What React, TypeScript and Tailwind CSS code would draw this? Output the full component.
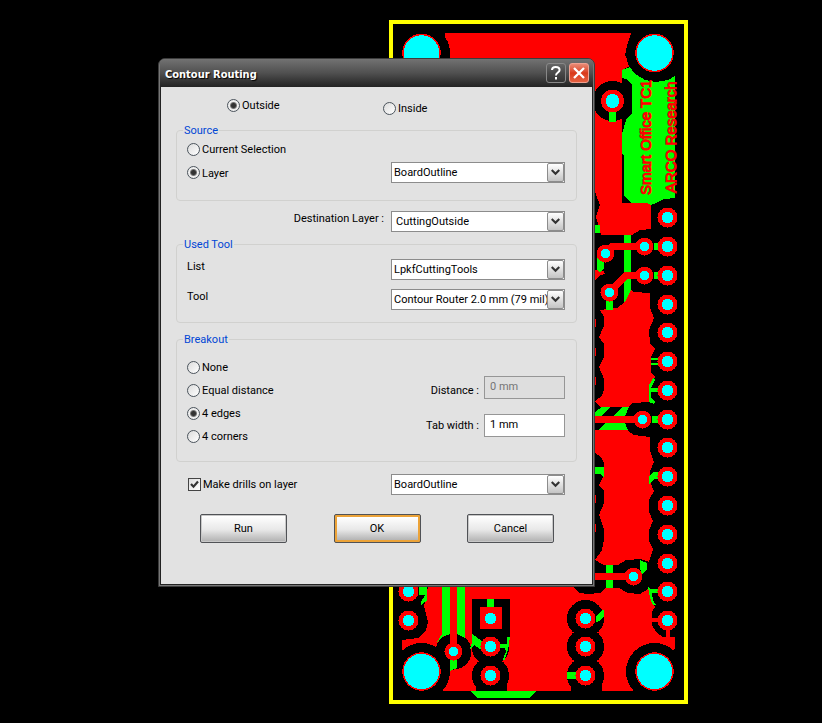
import type { ReactNode } from "react";

const RED = "#ff0000";
const GREEN = "#00ff00";
const CYAN = "#00ffff";

type Point = [number, number];

const columnPads: Point[] = [
  217, 246, 275, 304, 332, 361, 390, 419, 447, 476, 505, 534, 563, 591, 620,
].map((y): Point => [667.5, y + 0.5]);

const largePads: Point[] = [
  ...columnPads,
  [585.5, 618.5],
  [585.5, 646.5],
  [585.5, 675.5],
  [408.5, 591.5],
  [408.5, 620.5],
  [490.5, 646.5],
  [490.5, 675.5],
];

const vias: Point[] = [
  [644.5, 246.5],
  [605.5, 253.5],
  [644.5, 275.5],
  [609.5, 292.5],
  [642.5, 419.5],
  [633.5, 576.5],
  [453.5, 651.5],
];

const mountingHoles: Point[] = [
  [421.5, 53],
  [654.5, 53],
  [421.5, 671.5],
  [654.5, 671.5],
];

function CircuitBoard() {
  return (
    <svg
      className="absolute left-[389px] top-5"
      width="299"
      height="684"
      viewBox="389 20 299 684"
      shapeRendering="crispEdges"
      aria-label="Circuit board"
    >
      {/* copper areas */}
      <g fill={RED}>
        <path d="M445 33H631L625 55L630 66L622 70V203H651V229L640 230L632 235H601L596 217L600 205L595 192H445Z" />
        <path d="M595 230H632L634 233L628 235H604Z" />
        <path d="M595 270L604 271L605 274L600 275L595 280Z" />
        <path d="M600 310L617 308L624 303L627 295L629 288L634 292L650 293V308L654 318L649 330L650 344L655 349L651 357V373L655 377L650 387V402L632 403L628 407H600L595 401L602 396L604 390V379L599 367L604 357V344L599 337L604 326V317Z" />
        <path d="M595 430H627L634 435L650 437V451L654 462L650 471V482L654 491L649 500V512L653 521L649 530V541L653 549L649 562L641 559L626 560L618 565H604L595 560L602 550L604 539V529L599 515L604 503V491L599 485L604 475V463L601 457L595 453Z" />
        <path d="M428 587H573L580 593L588 594L600 593L605 588H619L628 593L640 594L648 589L655 607L652 612V625L656 632L663 637H675V648L650 691H444L402 660V640L418 638L426 630L428 622L424 606Z" />
        <path d="M595 319h1v8h-1zM595 348h1v8h-1zM595 377h1v8h-1zM595 495h1v8h-1zM595 524h1v8h-1zM595 97h1v9h-1z" />
      </g>

      {/* clearances */}
      <g fill="#000">
        {mountingHoles.map(([x, y]) => (
          <circle key={`${x}-${y}`} cx={x} cy={y} r="28.5" />
        ))}
        <circle cx="453.5" cy="651.5" r="18" />
        <circle cx="408.5" cy="620.5" r="18.5" />
        <circle cx="408.5" cy="591.5" r="18.5" />
        <rect x="472" y="599" width="38" height="40" />
        <circle cx="490.5" cy="646.5" r="19" />
        <circle cx="490.5" cy="675.5" r="18.5" />
        <circle cx="585.5" cy="618.5" r="18.5" />
        <circle cx="585.5" cy="646.5" r="18.5" />
        <circle cx="585.5" cy="675.5" r="18.5" />
        <rect x="476" y="684" width="31" height="8" />
        <rect x="571" y="684" width="31" height="8" />
      </g>
      <rect x="391" y="22" width="295" height="680" fill="none" stroke="#ffff00" strokeWidth="4" />

      {/* top label field */}
      <path
        d="M622 70L630 67L634 73L645 80L656 82L668 80L675 76V198L664 199L656 203L651 205L647 203H632L624 196V155L622 154V134L626 120L632 113V85L628 80L622 78Z"
        fill={GREEN}
      />
      <circle cx="612.5" cy="101" r="20" fill="#000" />
      <path d="M595 117L601 119L606 122H622V130H595Z" fill={RED} />
      <path d="M656 203L664 199L675 198V205H656Z" fill="#000" />

      {/* green layer */}
      <g fill={GREEN}>
        <rect x="609" y="112" width="7" height="10" />
        <rect x="595" y="225" width="5" height="8" />
        <path d="M624 235H631V290L626 300L624 303Z" />
        <path d="M597 257H604V268L600 273L597 270Z" />
        <rect x="606" y="300" width="7" height="10" />
        <rect x="654" y="243" width="5" height="7" />
        <rect x="654" y="272" width="5" height="7" />
        <path d="M651 358h8v2h-8zM651 363h8v2h-8z" />
        <path d="M654 377L655 380L651 388H659V392H651V398L655 402L654 404L649 402V385Z" />
        <path d="M595 416V412L602 407H610L601 416ZM613 416L622 407H629L625 416ZM599 430L605 423H625L628 430Z" />
        <rect x="652" y="416" width="7" height="7" />
        <path d="M595 467H604V477L600 474H595Z" />
        <path d="M649 476L653 472H659V479H654L649 484Z" />
        <path d="M640 560L647 563V570L642 574L640 568Z" />
        <rect x="606" y="565" width="7" height="23" />
        <path d="M648 587L651 589H659V593H652L653 600L656 605H653L650 598Z" />
        <path d="M596 616L603 609L604 611V617L599 621L596 622Z" />
        <rect x="567" y="672" width="10" height="7" />
        <path d="M419 587H427V601L423 603L421 606V602L425 595H419Z" />
        <path d="M442 587H450V634L444 636L437 642L442 634ZM457 587H465V638L457 634Z" />
        <path d="M450 659H457V668L450 671Z" />
        <rect x="487" y="599" width="7" height="9" />
        <path d="M472 634L482 641L483 651L474 645L470 649L472 642Z" />
        <path d="M500 644H507V637H510L508 650L504 661L503 659L506 652L505 648H500Z" />
        <path d="M470 691H536L530 698H477Z" />
      </g>

      {/* traces */}
      <g fill="none" stroke={RED} strokeWidth="7">
        <path d="M606 253L612 246.5H645" />
        <path d="M610 292L626 275.5H645" />
        <path d="M595 419.5H643M595 576.5H634M453.5 587V651" />
        <path d="M651 620H660M668 628V640" strokeWidth="4" />
      </g>
      <rect x="480" y="607" width="22" height="22" fill={RED} />
      <circle cx="490.5" cy="618.5" r="5.7" fill={CYAN} />

      {largePads.map(([x, y]) => (
        <g key={`${x}-${y}`}>
          <circle cx={x} cy={y} r="10" fill={RED} />
          <circle cx={x} cy={y} r="5.7" fill={CYAN} />
        </g>
      ))}
      {vias.map(([x, y]) => (
        <g key={`${x}-${y}`}>
          <circle cx={x} cy={y} r="9" fill={RED} />
          <circle cx={x} cy={y} r="4.7" fill={CYAN} />
        </g>
      ))}
      <circle cx="612.5" cy="101" r="11.5" fill={RED} />
      <circle cx="612.5" cy="101" r="7" fill={CYAN} />
      {mountingHoles.map(([x, y]) => (
        <circle key={`${x}-${y}`} cx={x} cy={y} r="18.5" fill={CYAN} stroke={RED} strokeWidth="1.5" />
      ))}

      <g
        fill={RED}
        stroke={RED}
        strokeWidth="1"
        fontFamily="'Liberation Sans', Arial, sans-serif"
        fontSize="15"
      >
        <text transform="translate(651 195) rotate(-90)">Smart Office TC1</text>
        <text transform="translate(676 193) rotate(-90)">ARCO Research</text>
      </g>
    </svg>
  );
}

function Radio({ name, label, checked }: { name: string; label: string; checked?: boolean }) {
  return (
    <label className="flex h-[14px] items-center gap-[2px]">
      <input
        type="radio"
        name={name}
        defaultChecked={checked}
        className="size-[13px] shrink-0 appearance-none rounded-full border border-[#4b545c] bg-linear-to-br from-[#dcdcdc] to-white checked:bg-[radial-gradient(circle,#333_0_2px,#777_3px,#eee_4px)]"
      />
      <span className="pt-[2px]">{label}</span>
    </label>
  );
}

function Combo({ id, value, label, indent }: { id: string; value: string; label?: string; indent?: boolean }) {
  return (
    <div className="relative h-[21px] w-[174px] shrink-0">
      <select
        id={id}
        aria-label={label}
        className={`block size-full appearance-none border border-[#8c8c8c] bg-white pr-4 pt-px text-black outline-none ${indent ? "pl-1" : "pl-[2px]"}`}
      >
        <option>{value}</option>
      </select>
      <span className="pointer-events-none absolute inset-y-px right-px flex w-[17px] items-center justify-center rounded-xs border border-[#8c8c8c] bg-linear-to-b from-white to-[#c4c4c4]">
        <svg width="9" height="7" viewBox="0 0 9 7" fill="none" stroke="#333" strokeWidth="2.2">
          <path d="M0.7 1L4.5 4.8L8.3 1" />
        </svg>
      </span>
    </div>
  );
}

function Group({ title, className, children }: { title: string; className: string; children: ReactNode }) {
  return (
    <fieldset className={`min-w-0 rounded-[4px] border border-[#d1d1cf] px-[10px] ${className}`}>
      <legend className="-ml-1 h-[14px] px-px pt-px text-[#0046d5]">{title}</legend>
      {children}
    </fieldset>
  );
}

function PushButton({ children, primary }: { children: string; primary?: boolean }) {
  return (
    <button
      type="button"
      className={
        primary
          ? "h-[29px] w-[87px] rounded-[2px] border border-[#505256] bg-[#eca338] p-[2px]"
          : "h-[29px] w-[87px] rounded-[2px] border border-[#505256] bg-[#c8c8c8] p-px"
      }
    >
      <span className="flex size-full items-center justify-center bg-linear-to-b from-white via-[#e8e8e8] via-55% to-[#b4b4b4] pt-px">
        {children}
      </span>
    </button>
  );
}

function TitleBar() {
  return (
    <header className="flex h-7 items-center justify-between bg-linear-to-b from-[#727272] via-[#505050] via-50% to-[#232323] pl-[5px] pr-1">
      <h1
        id="dialog-title"
        className="pt-[3px] font-['DejaVu_Sans_Condensed','DejaVu_Sans',sans-serif] text-[11px] font-bold text-white [text-shadow:1px_1px_1px_#000]"
      >
        Contour Routing
      </h1>
      <div className="flex gap-[3px]">
        <button
          type="button"
          aria-label="Help"
          className="flex size-5 items-center justify-center rounded-[3px] border border-[#888] bg-linear-to-b from-[#666] via-[#484848] to-[#333]"
        >
          <svg width="12" height="14" viewBox="0 0 12 14" fill="none" stroke="#fff" strokeWidth="2">
            <path d="M2 4C2 1.8 3.6 1 5.7 1C8 1 9.6 2 9.6 4C9.6 6.5 6 6.5 6 9.4M6 11v2.4" />
          </svg>
        </button>
        <button
          type="button"
          aria-label="Close"
          className="flex size-5 items-center justify-center rounded-[3px] border border-[#f0a090] bg-linear-to-b from-[#e88a75] via-[#d93818] to-[#e66040]"
        >
          <svg width="12" height="12" viewBox="0 0 12 12" fill="none" stroke="#fff" strokeWidth="2.3">
            <path d="M1 1L11 11M11 1L1 11" />
          </svg>
        </button>
      </div>
    </header>
  );
}

export default function App() {
  return (
    <main className="relative min-h-screen overflow-hidden bg-black font-[Roboto,'DejaVu_Sans_Condensed',sans-serif] text-[11px] leading-[14px] text-black">
      <CircuitBoard />
      <section
        role="dialog"
        aria-labelledby="dialog-title"
        className="absolute left-[158px] top-[58px] w-[437px] overflow-hidden rounded-t-[7px] border border-[#3c3c3c] bg-[#777] px-px pb-px"
      >
        <TitleBar />
        <form className="border-x border-b border-[#222] bg-[#e2e2e2] px-[15px] pb-[41px]">
          <div className="flex h-9 items-start pl-[51px] pt-[11px]">
            <div className="w-39">
              <Radio name="side" label="Outside" checked />
            </div>
            <div className="pt-[3px]">
              <Radio name="side" label="Inside" />
            </div>
          </div>

          <Group title="Source" className="h-[78px]">
            <div className="flex flex-col gap-[6px] pt-[5px]">
              <Radio name="source" label="Current Selection" />
              <div className="flex items-center justify-between pr-px">
                <Radio name="source" label="Layer" checked />
                <Combo id="source-layer" label="Source layer" value="BoardOutline" />
              </div>
            </div>
          </Group>

          <div className="flex h-9 items-start justify-end gap-[7px] pr-3 pt-[10px]">
            <label htmlFor="destination" className="pt-px">Destination Layer :</label>
            <Combo id="destination" value="CuttingOutside" indent />
          </div>

          <Group title="Used Tool" className="h-[86px]">
            <div className="flex flex-col gap-[9px] pr-px pt-2">
              <div className="flex items-start justify-between">
                <label htmlFor="tool-list" className="pt-px">List</label>
                <Combo id="tool-list" value="LpkfCuttingTools" />
              </div>
              <div className="flex items-start justify-between">
                <label htmlFor="tool" className="pt-px">Tool</label>
                <Combo id="tool" value="Contour Router 2.0 mm (79 mil)" />
              </div>
            </div>
          </Group>

          <Group title="Breakout" className="mt-[9px] h-[130px]">
            <div className="flex items-start justify-between pr-px pt-[14px]">
              <div className="flex flex-col gap-[9px]">
                <Radio name="breakout" label="None" />
                <Radio name="breakout" label="Equal distance" />
                <Radio name="breakout" label="4 edges" checked />
                <Radio name="breakout" label="4 corners" />
              </div>
              <div className="flex flex-col gap-[15px] pt-4">
                <div className="flex items-end justify-end gap-[5px]">
                  <label htmlFor="distance" className="pb-px">Distance :</label>
                  <input
                    id="distance"
                    disabled
                    defaultValue="0 mm"
                    className="h-[23px] w-[81px] border border-[#969696] bg-[#dedede] pb-[2px] pl-[5px] text-[#757575]"
                  />
                </div>
                <div className="flex items-center justify-end gap-[5px]">
                  <label htmlFor="tab-width">Tab width :</label>
                  <input
                    id="tab-width"
                    defaultValue="1 mm"
                    className="h-[23px] w-[81px] border border-[#969696] bg-white pb-[2px] pl-[5px]"
                  />
                </div>
              </div>
            </div>
          </Group>

          <div className="flex items-center justify-between pl-3 pr-3 pt-3">
            <label className="flex items-center gap-[2px]">
              <span className="relative size-[13px]">
                <input
                  type="checkbox"
                  defaultChecked
                  className="peer block size-[13px] appearance-none border border-[#444] bg-linear-to-br from-[#ddd] to-white"
                />
                <svg
                  className="pointer-events-none absolute inset-0 hidden peer-checked:block"
                  width="13"
                  height="13"
                  viewBox="0 0 13 13"
                  fill="none"
                  stroke="#333"
                  strokeWidth="2.2"
                >
                  <path d="M3 6L5.5 8.7L10 3.5" />
                </svg>
              </span>
              Make drills on layer
            </label>
            <Combo id="drill-layer" label="Drill layer" value="BoardOutline" />
          </div>

          <div className="flex justify-between pl-6 pr-[23px] pt-[19px]">
            <PushButton>Run</PushButton>
            <PushButton primary>OK</PushButton>
            <PushButton>Cancel</PushButton>
          </div>
        </form>
      </section>
    </main>
  );
}
